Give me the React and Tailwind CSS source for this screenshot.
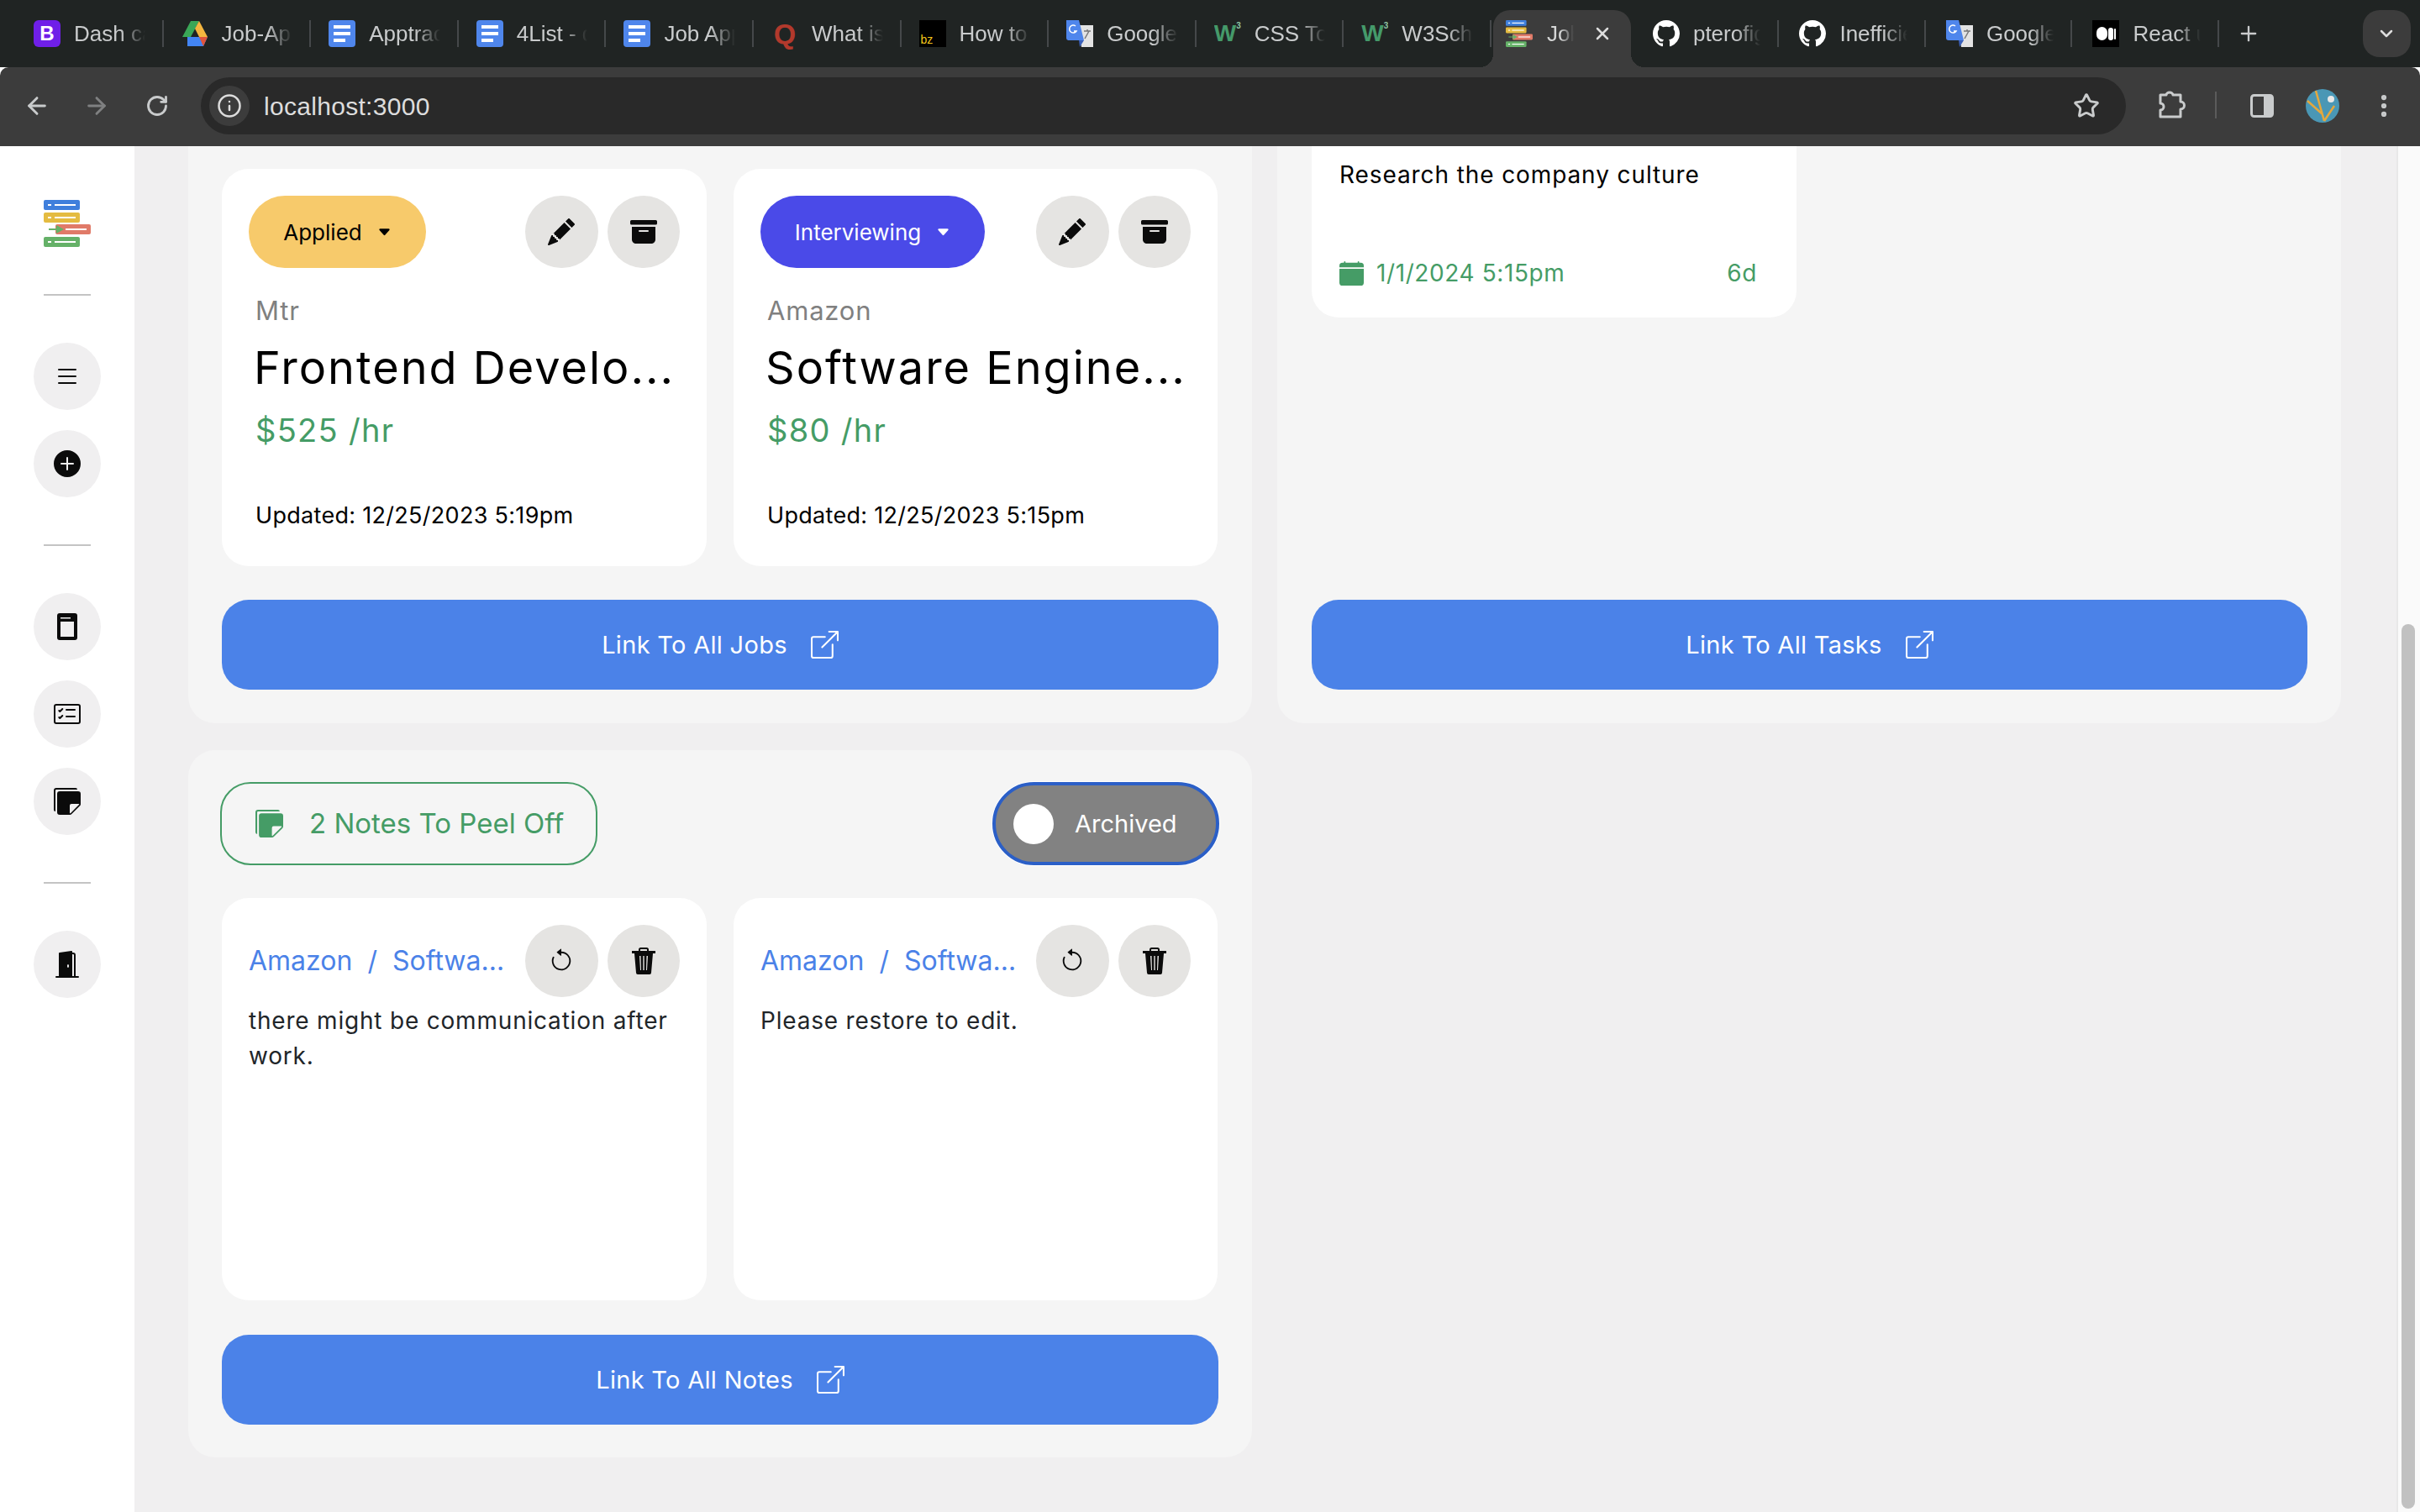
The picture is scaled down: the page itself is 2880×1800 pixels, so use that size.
// Job tracker dashboard inside a dark browser window
import { ArrowLeft, ArrowRight, ChevronDown, EllipsisVertical, Info, Plus, RotateCw, Star, X } from 'lucide-react';
import {
  BsArchiveFill, BsArrowCounterclockwise, BsBoxArrowUpRight, BsCalendarFill, BsCardChecklist, BsCaretDownFill,
  BsDoorOpenFill, BsGithub, BsList, BsPencilFill, BsPlusCircleFill, BsStickiesFill,
} from 'react-icons/bs';

function Logo({ className }) {
  return (
    <svg viewBox="0 0 56 56" className={className}>
      <rect x="0" y="0" width="43" height="12" rx="2" fill="#3f7fdc" />
      <rect x="0" y="15" width="43" height="12" rx="2" fill="#e4bb41" />
      <rect x="14" y="29" width="42" height="12" rx="2" fill="#e07a68" />
      <rect x="0" y="44" width="43" height="12" rx="2" fill="#65b168" />
      <path d="M6 35h12M15 31l7 4-7 4" stroke="#65b168" strokeWidth="2" fill="#65b168" />
      <g fill="#fff">
        <rect x="5" y="5" width="4" height="2" />
        <rect x="13" y="5" width="25" height="2" />
        <rect x="5" y="20" width="4" height="2" />
        <rect x="13" y="20" width="25" height="2" />
        <rect x="26" y="34" width="25" height="2" />
        <rect x="5" y="49" width="4" height="2" />
        <rect x="13" y="49" width="25" height="2" />
      </g>
    </svg>
  );
}

function DocFavicon() {
  return (
    <svg viewBox="0 0 32 32" className="w-8 h-8">
      <rect x="0" y="0" width="32" height="32" rx="4" fill="#4f86ec" />
      <rect x="6" y="6" width="20" height="4" fill="#fff" />
      <rect x="6" y="14" width="20" height="4" fill="#fff" />
      <rect x="6" y="22" width="14" height="4" fill="#fff" />
    </svg>
  );
}

function TranslateFavicon() {
  return (
    <svg viewBox="0 0 32 32" className="w-8 h-8">
      <path d="M14 6h18v26H18z" fill="#e3e3e3" />
      <path d="M0 0h15l6 24H3a3 3 0 0 1-3-3z" fill="#4f86ec" />
      <path d="M15 24h6l-5 8z" fill="#3a5fb8" />
      <path d="M11 7a4.500 4.500 0 1 0 1 6h-3" stroke="#fff" strokeWidth="1.500" fill="none" />
      <path d="M21 13h8M25 11v2M22 22l5-9" stroke="#777" strokeWidth="1.500" fill="none" />
    </svg>
  );
}

function DriveFavicon() {
  return (
    <svg viewBox="0 0 32 32" className="w-8 h-8">
      <path d="M11 1h10L11 20H1z" fill="#3aa757" />
      <path d="M21 1l10 19H21L16 10z" fill="#f4b63f" />
      <path d="M7 20h24l-5 11H7z" fill="#4285f4" />
      <path d="M26 31l5-11H21z" fill="#e0543d" />
    </svg>
  );
}

function W3Favicon() {
  return (
    <span className="w-8 h-8 flex items-start overflow-hidden text-[#459a6a] font-bold text-[28px] leading-[32px] [font-family:'Liberation_Sans',sans-serif]">
      W<span className="text-[10px] leading-[14px] text-[#8fc3a4]">3</span>
    </span>
  );
}

const tabs = [
  { title: 'Dash cards', icon: <span className="w-8 h-8 rounded-md bg-[#6f1fe8] text-white flex items-center justify-center text-[24px] font-bold">B</span> },
  { title: 'Job-Application', icon: <DriveFavicon /> },
  { title: 'Apptracker', icon: <DocFavicon /> },
  { title: '4List - doc', icon: <DocFavicon /> },
  { title: 'Job Application', icon: <DocFavicon /> },
  { title: 'What is', icon: <span className="w-8 h-8 flex items-center justify-center text-[#b2392c] text-[34px] font-bold leading-none">Q</span> },
  { title: 'How to', icon: <span className="block w-8 h-8 bg-black text-[#f3c51a] text-[14px] leading-[14px] pt-[16px] pl-[2px]">bz</span> },
  { title: 'Google', icon: <TranslateFavicon /> },
  { title: 'CSS Tooltips', icon: <W3Favicon /> },
  { title: 'W3Schools', icon: <W3Favicon /> },
];

const tabsAfter = [
  { title: 'pterofigma', icon: <BsGithub className="w-8 h-8 text-white" /> },
  { title: 'Inefficient', icon: <BsGithub className="w-8 h-8 text-white" /> },
  { title: 'Google', icon: <TranslateFavicon /> },
  {
    title: 'React useState',
    icon: (
      <span className="w-8 h-8 bg-black flex items-center justify-center gap-[1px]">
        <span className="w-[13px] h-[16px] rounded-full bg-white" />
        <span className="w-[6px] h-[15px] rounded-full bg-white" />
        <span className="w-[2px] h-[13px] rounded-full bg-white" />
      </span>
    ),
  },
];

function Tab({ tab, className }) {
  return (
    <div className={`${className} h-[80px] shrink-0 flex items-center`}>
      <div className="shrink-0">{tab.icon}</div>
      <span className="ml-[16px] flex-1 min-w-0 overflow-hidden whitespace-nowrap text-[26px] text-[#c9cbcc] [mask-image:linear-gradient(to_right,black_65%,transparent)]">
        {tab.title}
      </span>
      <span className="w-[2px] h-[32px] bg-[#45484a] ml-[20px] shrink-0" />
    </div>
  );
}

function BrowserChrome() {
  return (
    <header className="shrink-0 [font-family:'Liberation_Sans',sans-serif]">
      <div className="h-[80px] bg-[#202423] flex pl-[19px]">
        {tabs.map((t) => <Tab key={t.title} tab={t} className="w-[175.6px] pl-[21px]" />)}

        <div className="relative w-[164px] mt-[12px] ml-[2px] mr-[2px] h-[68px] shrink-0 bg-[#3c3c3c] rounded-t-[20px] flex items-start pt-[12px] pl-[15px]">
          <span className="absolute bottom-0 -left-[16px] w-[16px] h-[16px] bg-[radial-gradient(circle_at_0_0,transparent_16px,#3c3c3c_16px)]" />
          <span className="absolute bottom-0 -right-[16px] w-[16px] h-[16px] bg-[radial-gradient(circle_at_100%_0,transparent_16px,#3c3c3c_16px)]" />
          <Logo className="w-8 h-8 shrink-0" />
          <span className="ml-[17px] w-[32px] overflow-hidden whitespace-nowrap text-[26px] leading-[32px] text-[#d5d6d6] [mask-image:linear-gradient(to_right,black_50%,transparent)]">Job</span>
          <X className="ml-[22px] mt-[4px] text-[#dddddd]" size={24} strokeWidth={2.5} />
        </div>

        {tabsAfter.map((t, i) => <Tab key={i} tab={t} className="w-[174.5px] pl-[24px]" />)}

        <Plus className="ml-[21px] mt-[26px] text-[#c9cbcc]" size={28} />
        <div className="ml-[122px] mt-[12px] w-[57px] h-[56px] rounded-[20px] bg-[#3c3c3c] flex items-center justify-center">
          <ChevronDown className="text-[#dddddd]" size={24} strokeWidth={2.5} />
        </div>
      </div>

      <div className="h-[94px] bg-[#3c3c3c] flex items-start pt-[12px] rounded-tl-[10px] rounded-tr-[10px] text-[#c9cbcc]">
        <ArrowLeft className="ml-[28px] mt-[18px]" size={32} strokeWidth={2.2} />
        <ArrowRight className="ml-[39px] mt-[18px] text-[#7f8081]" size={32} strokeWidth={2.2} />
        <RotateCw className="ml-[42px] mt-[20px]" size={28} strokeWidth={2.4} />
        <div className="ml-[38px] w-[2291px] h-[68px] rounded-full bg-[#292929] flex items-center pl-[10px] pr-[31px]">
          <span className="w-[48px] h-[48px] rounded-full bg-[#3c3c3c] flex items-center justify-center">
            <Info size={30} className="text-[#dddddd]" strokeWidth={2} />
          </span>
          <span className="ml-[17px] text-[30px] tracking-[0.3px] text-[#dddddd] flex-1">localhost:3000</span>
          <Star size={32} strokeWidth={2.2} />
        </div>
        <svg viewBox="0 0 34 34" className="ml-[38px] mt-[15px] w-[34px] h-[34px]" fill="none" stroke="currentColor" strokeWidth="3" strokeLinejoin="round">
          <path d="M3 6H10a4 3 0 0 1 8 0H27V14a4 4 0 0 1 0 9V32H3V24a4 4 0 0 0 0-8Z" />
        </svg>
        <span className="ml-[34px] mt-[17px] w-[2px] h-[32px] bg-[#5b5b5b]" />
        <svg viewBox="0 0 28 28" className="ml-[40px] mt-[20px] w-[28px] h-[28px]">
          <rect x="1.5" y="1.5" width="25" height="25" rx="3" fill="none" stroke="currentColor" strokeWidth="3" />
          <rect x="16" y="2" width="10" height="24" fill="currentColor" />
        </svg>
        <svg viewBox="0 0 40 40" className="ml-[38px] mt-[14px] w-[40px] h-[40px]">
          <circle cx="20" cy="20" r="20" fill="#4a97b5" />
          <path d="M2 14l18 16M12 2l10 36M22 38l12-18" stroke="#e5a83d" strokeWidth="2.5" fill="none" />
          <circle cx="30" cy="12" r="4" fill="#e8e8e8" />
        </svg>
        <EllipsisVertical className="ml-[36px] mt-[17px]" size={34} strokeWidth={2.4} />
      </div>
    </header>
  );
}

function SideButton({ children }) {
  return <button className="w-[80px] h-[80px] rounded-full bg-[#f0eff0] flex items-center justify-center text-[#0b0b0b]">{children}</button>;
}

function SideRule({ className }) {
  return <span className={`w-[56px] h-[2px] bg-[#c4c4c4] ${className}`} />;
}

function JobsIcon() {
  return (
    <svg viewBox="0 0 24 32" className="w-[24px] h-[32px]">
      <rect x="0" y="0" width="24" height="32" rx="3" fill="#0b0b0b" />
      <rect x="4" y="10" width="16" height="18" fill="#f0eff0" />
      <rect x="4" y="5" width="12" height="1.5" fill="#f0eff0" />
    </svg>
  );
}

function TrashIcon() {
  return (
    <svg viewBox="0 0 28 32" className="w-[28px] h-[32px]">
      <path d="M9 5V2.500A1.500 1.500 0 0 1 10.500 1h7A1.500 1.500 0 0 1 19 2.500V5" fill="none" stroke="#0b0b0b" strokeWidth="2" />
      <rect x="0" y="4" width="28" height="3" fill="#0b0b0b" />
      <path d="M3 7h22l-2 23a2 2 0 0 1-2 2H7a2 2 0 0 1-2-2z" fill="#0b0b0b" />
      <path d="M9 10h1.500l.5 17H10zM13.300 10h1.400v17h-1.400zM17.500 10H19l-1 17h-1z" fill="#e5e4e2" />
    </svg>
  );
}

function Sidebar() {
  return (
    <aside className="w-[160px] shrink-0 bg-white flex flex-col items-center pt-[64px]">
      <Logo className="w-[56px] h-[56px]" />
      <SideRule className="mt-[56px]" />
      <div className="mt-[56px] flex flex-col gap-[24px]">
        <SideButton><BsList size={32} /></SideButton>
        <SideButton><BsPlusCircleFill size={32} /></SideButton>
      </div>
      <SideRule className="mt-[56px]" />
      <div className="mt-[56px] flex flex-col gap-[24px]">
        <SideButton><JobsIcon /></SideButton>
        <SideButton><BsCardChecklist size={32} /></SideButton>
        <SideButton><BsStickiesFill size={32} /></SideButton>
      </div>
      <SideRule className="mt-[56px]" />
      <div className="mt-[56px]">
        <SideButton><BsDoorOpenFill size={32} /></SideButton>
      </div>
    </aside>
  );
}

function IconButton({ children }) {
  return <button className="w-[86.4px] h-[86px] rounded-full bg-[#e5e4e2] flex items-center justify-center text-[#0b0b0b]">{children}</button>;
}

function JobCard({ status, statusClass, statusWidth, company, title, pay, updated }) {
  return (
    <div className="bg-white rounded-[32px] p-[32px] pb-[40px]">
      <div className="flex items-center justify-between">
        <button className={`${statusWidth} ${statusClass} h-[86px] rounded-full flex items-center justify-center gap-[18px] text-[26px]`}>
          {status}
          <BsCaretDownFill size={17} />
        </button>
        <div className="flex gap-[11px]">
          <IconButton><BsPencilFill size={32} /></IconButton>
          <IconButton><BsArchiveFill size={32} /></IconButton>
        </div>
      </div>
      <div className="pl-[8px]">
        <p className="mt-[31px] h-[40px] leading-[40px] text-[31px] tracking-[0.8px] text-[#808080]">{company}</p>
        <h3 className="mt-[18px] -ml-[2px] h-[60px] leading-[60px] text-[54px] tracking-[2px] text-black whitespace-nowrap">{title}</h3>
        <p className="mt-[22px] h-[44px] leading-[44px] text-[38px] tracking-[1.3px] text-[#459c66]">{pay}</p>
        <p className="mt-[60px] h-[40px] leading-[40px] text-[27px] tracking-[0.3px] text-black">{updated}</p>
      </div>
    </div>
  );
}

function NoteCard({ children }) {
  return (
    <div className="bg-white rounded-[32px] h-[479px] p-[32px]">
      <div className="flex items-center">
        <p className="flex-1 min-w-0 text-[32px] text-[#4b82e8] truncate">Amazon&nbsp; / &nbsp;Software Engineer</p>
        <div className="flex gap-[11px] ml-[18px] shrink-0">
          <IconButton><BsArrowCounterclockwise size={30} /></IconButton>
          <IconButton><TrashIcon /></IconButton>
        </div>
      </div>
      <p className="mt-[7px] text-[28px] leading-[42px] tracking-[0.8px] text-[#212529]">{children}</p>
    </div>
  );
}

function LinkButton({ label }) {
  return (
    <button className="w-full h-[107px] rounded-[32px] bg-[#4b82e8] text-white flex items-center justify-center gap-[28px] text-[29px] tracking-[0.3px]">
      {label}
      <BsBoxArrowUpRight size={33} />
    </button>
  );
}

function Dashboard() {
  return (
    <main className="flex-1 min-w-0 bg-[#f0eff0] overflow-hidden pl-[64px]">
      <div className="grid grid-cols-[1266px_1266px] gap-x-[30px] gap-y-[32px] items-start">
        {/* Jobs panel, its top is scrolled away */}
        <section className="h-[687px] bg-[#f5f5f5] rounded-b-[32px] px-[40px] pt-[27px]">
          <div className="grid grid-cols-[577px_576px] gap-x-[32px]">
            <JobCard
              status="Applied"
              statusClass="bg-[#f7ca6b] text-black"
              statusWidth="w-[211px]"
              company="Mtr"
              title="Frontend Develo..."
              pay="$525 /hr"
              updated="Updated: 12/25/2023 5:19pm"
            />
            <JobCard
              status="Interviewing"
              statusClass="bg-[#4a4ae8] text-white"
              statusWidth="w-[267px]"
              company="Amazon"
              title="Software Engine..."
              pay="$80 /hr"
              updated="Updated: 12/25/2023 5:15pm"
            />
          </div>
          <div className="mt-[40px]"><LinkButton label="Link To All Jobs" /></div>
        </section>

        {/* Tasks panel */}
        <section className="h-[687px] bg-[#f5f5f5] rounded-b-[32px] pl-[41px] pr-[40px] pb-[40px] flex flex-col justify-between">
          <div className="w-[577px] h-[204px] bg-white rounded-b-[32px] px-[33px] pt-[14px]">
            <p className="text-[28px] leading-[40px] tracking-[0.9px] text-black">Research the company culture</p>
            <div className="mt-[77px] flex items-center text-[#459c66] text-[28px] leading-[40px] tracking-[0.6px]">
              <BsCalendarFill size={29} />
              <span className="ml-[15px] flex-1">1/1/2024 5:15pm</span>
              <span className="mr-[14px]">6d</span>
            </div>
          </div>
          <LinkButton label="Link To All Tasks" />
        </section>

        {/* Notes panel */}
        <section className="h-[842px] bg-[#f5f5f5] rounded-[32px] px-[40px] pt-[38px]">
          <div className="flex items-center justify-between -ml-[2px] -mr-[1px]">
            <div className="w-[449px] h-[99px] rounded-[36px] border-2 border-[#459c66] flex items-center pl-[40px] gap-[31px] text-[#459c66] text-[33px]">
              <BsStickiesFill size={33} />
              2 Notes To Peel Off
            </div>
            <button className="w-[270px] h-[99px] rounded-full bg-[#828282] border-4 border-[#2b5fc7] ring-1 ring-white flex items-center pl-[21px] gap-[25px] text-white text-[29px]">
              <span className="w-[48px] h-[48px] rounded-full bg-white" />
              Archived
            </button>
          </div>
          <div className="mt-[39px] grid grid-cols-[577px_576px] gap-x-[32px]">
            <NoteCard>there might be communication after work.</NoteCard>
            <NoteCard>Please restore to edit.</NoteCard>
          </div>
          <div className="mt-[41px]"><LinkButton label="Link To All Notes" /></div>
        </section>
      </div>
    </main>
  );
}

function Scrollbar() {
  return (
    <div className="w-[28px] shrink-0 bg-[#fafafa] border-l-2 border-[#e8e8e8] pl-[4px] pr-[6px] pt-[569px] pb-[4px]">
      <div className="h-full rounded-full bg-[#c1c1c1]" />
    </div>
  );
}

export default function App() {
  return (
    <div className="w-[2880px] h-[1800px] flex flex-col overflow-hidden [font-family:Inter,sans-serif]">
      <BrowserChrome />
      <div className="flex-1 min-h-0 flex">
        <Sidebar />
        <Dashboard />
        <Scrollbar />
      </div>
    </div>
  );
}
